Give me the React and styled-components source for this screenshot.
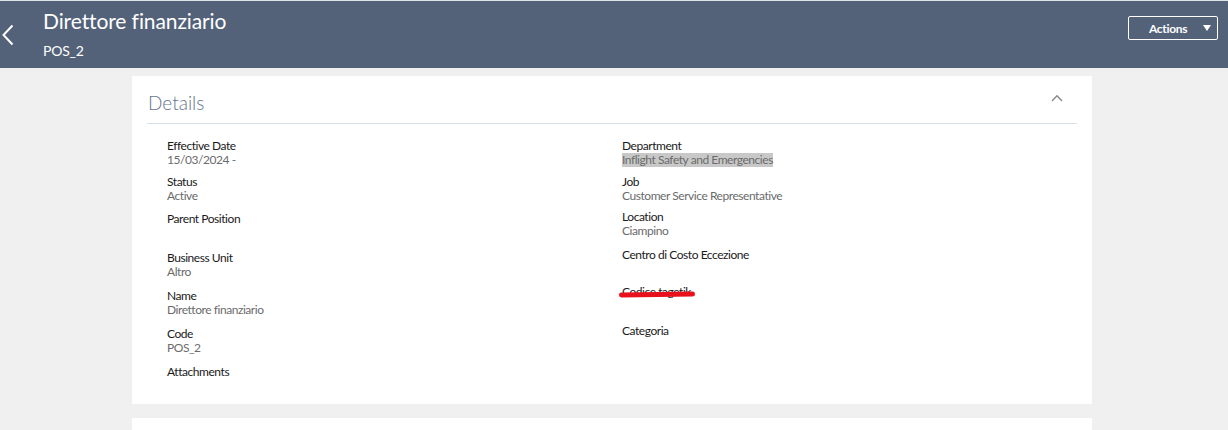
import React from "react";
import styled, { createGlobalStyle } from "styled-components";

const Global = createGlobalStyle`
  html, body { margin: 0; padding: 0; background: #f0f0f0; }
  body { font-family: Lato, "Open Sans", "Liberation Sans", sans-serif; }
  * { box-sizing: border-box; }
`;

const Page = styled.div`
  width: 1228px;
  height: 430px;
  overflow: hidden;
  background: #f0f0f0;
`;

const Header = styled.header`
  height: 68px;
  background: #536279;
  border-top: 1px solid #dfe3e8;
  display: flex;
  align-items: flex-start;
  color: #fff;
`;

const BackButton = styled.button`
  width: 43px;
  height: 67px;
  padding: 0 0 0 2px;
  border: 0;
  background: transparent;
  display: flex;
  align-items: center;
  justify-content: flex-start;
  color: #fff;
`;

const TitleBlock = styled.div`
  flex: 1;
  display: flex;
  flex-direction: column;
  padding-top: 6px;
`;

const Title = styled.h1`
  margin: 0;
  font-size: 21px;
  font-weight: 400;
  line-height: 28px;
  letter-spacing: -0.1px;
  color: #fff;
`;

const Subtitle = styled.div`
  font-size: 14px;
  line-height: 18px;
  margin-top: 7px;
  letter-spacing: -0.2px;
  color: #fff;
`;

const ActionsButton = styled.button`
  margin: 15px 10px 0 0;
  width: 90px;
  height: 24px;
  border: 1px solid #fff;
  border-radius: 2px;
  background: transparent;
  color: #fff;
  font-family: inherit;
  font-size: 12px;
  font-weight: 700;
  letter-spacing: -0.3px;
  display: flex;
  align-items: center;
  justify-content: space-between;
  padding: 0 6px 0 20px;
`;

const Caret = styled.span`
  width: 0;
  height: 0;
  border-left: 4px solid transparent;
  border-right: 4px solid transparent;
  border-top: 6px solid #fff;
`;

const Main = styled.main`
  padding: 8px 0 0 132px;
  display: flex;
  flex-direction: column;
  gap: 14px;
`;

const Card = styled.section`
  width: 960px;
  background: #fff;
  padding: 0 15px;
  min-height: ${(p) => p.$minHeight || "0px"};
`;

const CardHeader = styled.div`
  height: 48px;
  border-bottom: 1px solid #d6e0e7;
  display: flex;
  align-items: center;
  justify-content: space-between;
  padding: 5px 0 0 1px;
`;

const CardTitle = styled.h2`
  margin: 0;
  font-size: 19px;
  font-weight: 300;
  color: #66748c;
`;

const Collapse = styled.button`
  border: 0;
  background: transparent;
  padding: 0;
  margin-right: 14px;
  margin-top: -8px;
  display: flex;
`;

const Grid = styled.div`
  display: grid;
  grid-template-columns: 455px 1fr;
  padding: 14px 0 10px 20px;
`;

const Column = styled.div`
  display: flex;
  flex-direction: column;
`;

const Field = styled.div`
  position: relative;
  height: ${(p) => p.$h || 37}px;
  display: flex;
  flex-direction: column;
  align-items: flex-start;
`;

const Label = styled.div`
  font-size: 12px;
  line-height: 15px;
  letter-spacing: -0.45px;
  color: #1a1a1a;
`;

const Value = styled.div`
  font-size: 12px;
  line-height: 14px;
  letter-spacing: -0.45px;
  color: #6b6b6b;
  background: ${(p) => (p.$selected ? "#c8c8c8" : "transparent")};
`;

const Scribble = styled.span`
  position: absolute;
  left: -3px;
  top: 8px;
  width: 76px;
  height: 5px;
  border-radius: 3px;
  background: #e8101a;
  transform: rotate(-0.8deg);
`;

const left = [
  { label: "Effective Date", value: "15/03/2024 -", h: 36 },
  { label: "Status", value: "Active", h: 37 },
  { label: "Parent Position", value: "", h: 39 },
  { label: "Business Unit", value: "Altro", h: 38 },
  { label: "Name", value: "Direttore finanziario", h: 38 },
  { label: "Code", value: "POS_2", h: 38 },
  { label: "Attachments", value: "", h: 30 },
];

const right = [
  { label: "Department", value: "Inflight Safety and Emergencies", h: 36, selected: true },
  { label: "Job", value: "Customer Service Representative", h: 35 },
  { label: "Location", value: "Ciampino", h: 38 },
  { label: "Centro di Costo Eccezione", value: "", h: 37 },
  { label: "Codice tagetik", value: "", h: 39, scribble: true },
  { label: "Categoria", value: "", h: 30 },
];

function FieldItem({ f }) {
  return (
    <Field $h={f.h}>
      <Label>{f.label}</Label>
      {f.value ? <Value $selected={f.selected}>{f.value}</Value> : null}
      {f.scribble ? <Scribble /> : null}
    </Field>
  );
}

export default function App() {
  return (
    <Page>
      <Global />
      <Header>
        <BackButton aria-label="Back">
          <svg width="12" height="22" viewBox="0 0 12 22">
            <path d="M10.5 1.5 L1.5 11 L10.5 20.5" fill="none" stroke="#fff" strokeWidth="2" />
          </svg>
        </BackButton>
        <TitleBlock>
          <Title>Direttore finanziario</Title>
          <Subtitle>POS_2</Subtitle>
        </TitleBlock>
        <ActionsButton>
          Actions
          <Caret />
        </ActionsButton>
      </Header>
      <Main>
        <Card>
          <CardHeader>
            <CardTitle>Details</CardTitle>
            <Collapse aria-label="Collapse">
              <svg width="12" height="8" viewBox="0 0 12 8">
                <path d="M1 7 L6 1.8 L11 7" fill="none" stroke="#8a8a8a" strokeWidth="1.4" />
              </svg>
            </Collapse>
          </CardHeader>
          <Grid>
            <Column>
              {left.map((f) => (
                <FieldItem key={f.label} f={f} />
              ))}
            </Column>
            <Column>
              {right.map((f) => (
                <FieldItem key={f.label} f={f} />
              ))}
            </Column>
          </Grid>
        </Card>
        <Card $minHeight="40px" />
      </Main>
    </Page>
  );
}
